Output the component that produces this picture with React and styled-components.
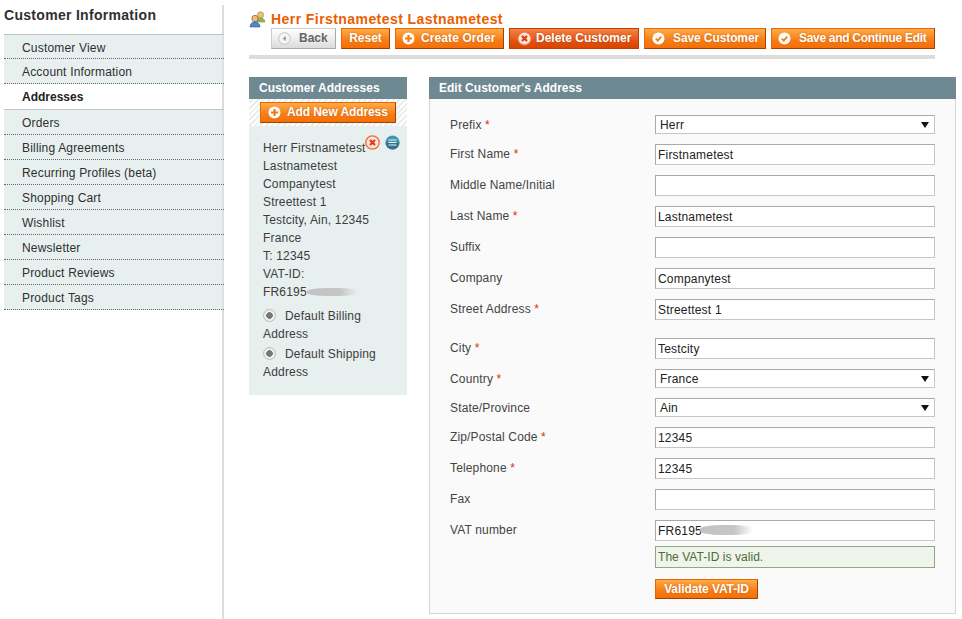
import React from 'react'
import styled, { createGlobalStyle, css } from 'styled-components'

const GlobalStyle = createGlobalStyle`
  html, body {
    margin: 0;
    padding: 0;
    background: #fff;
  }
  body {
    font-family: "Liberation Sans", Arial, sans-serif;
    font-size: 12px;
    color: #2f2f2f;
  }
`

const Page = styled.div`
  display: flex;
  width: 962px;
  height: 619px;
  overflow: hidden;
  box-sizing: border-box;
  padding-left: 4px;
`

const Sidebar = styled.aside`
  width: 220px;
  flex: none;
  box-sizing: border-box;
  margin-top: 5px;
  border-right: 2px solid #dcdcdc;
`

const SideTitle = styled.h3`
  margin: 0;
  height: 29px;
  font-size: 14px;
  line-height: 20px;
  font-weight: bold;
  color: #2f2f2f;
  letter-spacing: 0.3px;
`

const SideNav = styled.ul`
  list-style: none;
  margin: 0 -2px 0 0;
  padding: 0;
  border-top: 1px solid #bfc5c5;
`

const SideItem = styled.li`
  box-sizing: border-box;
  height: 25px;
  padding-left: 18px;
  line-height: 26px;
  letter-spacing: 0.18px;
  color: #2f2f2f;
  background: #e7efef;
  border-bottom: 1px dotted #666;
  box-shadow: inset -2px 0 0 rgba(0, 0, 0, 0.05);
  &:first-child {
    height: 24px;
  }
  ${props => props.$active && css`
    background: #fff;
    font-weight: bold;
    color: #222;
    letter-spacing: 0;
    height: 26px;
    border-bottom: 1px solid #bfc5c5;
    box-shadow: inset -2px 0 0 #dcdcdc;
  `}
`

const Content = styled.main`
  flex: 1;
  padding: 10px 6px 0 25px;
`

const HeaderBlock = styled.header`
  width: 686px;
  height: 45px;
  border-bottom: 4px solid #dcdcdc;
`

const TitleRow = styled.div`
  display: flex;
  align-items: center;
  gap: 5px;
  height: 18px;
`

const Title = styled.h1`
  margin: 0;
  font-size: 14px;
  line-height: 18px;
  font-weight: bold;
  color: #eb5e00;
  letter-spacing: 0.43px;
`

const Toolbar = styled.div`
  display: flex;
  gap: 5px;
  padding-left: 22px;
`

const variants = {
  primary: css`
    color: #fff;
    border-color: #ed6502 #a04300 #a04300 #ed6502;
    background: linear-gradient(#ffac47, #f77c16 60%, #f46f08);
    text-shadow: 0 0 2px rgba(170, 70, 0, 0.6);
  `,
  danger: css`
    color: #fff;
    border-color: #c73c00;
    background: linear-gradient(#f38544, #e2500f 65%, #d94400);
    text-shadow: 0 0 2px rgba(150, 40, 0, 0.6);
  `,
  back: css`
    color: #666;
    border-color: #ccc #aaa #aaa #ccc;
    background: linear-gradient(#fff, #dcdcdc);
  `,
}

const Button = styled.button`
  display: flex;
  align-items: center;
  justify-content: ${props => (props.$icon ? 'flex-start' : 'center')};
  gap: ${props => props.$gap || 8}px;
  box-sizing: border-box;
  width: ${props => props.$w}px;
  height: 21px;
  padding: 0 0 1px ${props => props.$pad ?? 0}px;
  border: 1px solid;
  font-family: inherit;
  font-size: 12px;
  font-weight: bold;
  letter-spacing: ${props => props.$ls ?? -0.1}px;
  white-space: nowrap;
  ${props => variants[props.$kind || 'primary']}
  svg {
    flex: none;
  }
`

const Columns = styled.div`
  display: flex;
  align-items: flex-start;
  gap: 22px;
  margin-top: 18px;
`

const PanelHead = styled.div`
  box-sizing: border-box;
  height: 22px;
  padding-left: 10px;
  line-height: 22px;
  font-weight: bold;
  letter-spacing: 0.02px;
  color: #fff;
  background: #6f8992;
`

const LeftColumn = styled.section`
  width: 158px;
  flex: none;
`

const AddStrip = styled.div`
  box-sizing: border-box;
  height: 27px;
  padding: 3px 0 0 11px;
  background: repeating-linear-gradient(135deg, #fff 0 2px, #eceeee 2px 4px);
`

const AddressCard = styled.div`
  position: relative;
  box-sizing: border-box;
  height: 269px;
  padding: 13px 14px 0;
  line-height: 18px;
  letter-spacing: 0.18px;
  color: #3d3d3d;
  background: #e7efef;
`

const Line = styled.div`
  white-space: nowrap;
`

const CardIcons = styled.div`
  position: absolute;
  top: 9px;
  left: 116px;
  display: flex;
  gap: 5px;
`

const DefaultOption = styled.div`
  margin-top: ${props => props.$mt}px;
`

const Radio = styled.span`
  display: inline-block;
  box-sizing: border-box;
  width: 13px;
  height: 13px;
  margin-right: 9px;
  vertical-align: -2px;
  border: 1px solid #bcbcbc;
  border-radius: 50%;
  background: radial-gradient(circle, #777 0 3px, #eee 3.6px);
`

const VatValue = styled.span`
  position: relative;
  display: inline-block;
`

const Smudge = styled.i`
  position: absolute;
  top: ${props => props.$top}px;
  left: ${props => props.$left}px;
  width: ${props => props.$w}px;
  height: ${props => props.$h}px;
  border-radius: 40%;
  background: linear-gradient(90deg, #c2c2c2, #c6c6c6 65%, rgba(215, 215, 215, 0));
  filter: blur(0.7px);
`

const EditPanel = styled.section`
  width: 527px;
  flex: none;
`

const FormBody = styled.div`
  box-sizing: border-box;
  height: 515px;
  padding: 16px 20px 0;
  border: 1px solid #d6d6d6;
  border-top: none;
  background: #fafafa;
`

const FormRow = styled.div`
  display: flex;
  align-items: flex-start;
  margin-bottom: ${props => props.$gap ?? 10}px;
`

const FieldLabel = styled.label`
  width: 205px;
  height: 18px;
  flex: none;
  line-height: 20px;
  letter-spacing: 0.15px;
  color: #444;
`

const Required = styled.span`
  color: #d9300a;
`

const fieldBase = css`
  box-sizing: border-box;
  width: 280px;
  padding: 0 2px;
  background: #fff;
  font-family: inherit;
  font-size: 12px;
  letter-spacing: 0.2px;
  color: #222;
  border: 1px solid #c6c6c6;
  border-top-color: #aaa;
  border-left-color: #aaa;
`

const TextInput = styled.input`
  ${fieldBase}
  height: 21px;
  outline: none;
`

const SelectBox = styled.div`
  ${fieldBase}
  display: flex;
  align-items: center;
  justify-content: space-between;
  height: 19px;
  padding: 0 4px;
`

const Arrow = styled.span`
  width: 0;
  height: 0;
  margin-right: 1px;
  border-left: 4px solid transparent;
  border-right: 4px solid transparent;
  border-top: 6px solid #111;
`

const FieldStack = styled.div`
  position: relative;
  width: 280px;
`

const ValidMessage = styled.div`
  box-sizing: border-box;
  width: 280px;
  height: 22px;
  margin-top: 5px;
  padding-left: 2px;
  line-height: 20px;
  letter-spacing: 0.05px;
  color: #4f6a3d;
  background: #eff5ea;
  border: 1px solid #95a486;
`

const ValidateButton = styled(Button)`
  margin-top: 11px;
  height: 20px;
`

const PlusIcon = () => (
  <svg width="13" height="13" viewBox="0 0 13 13">
    <circle cx="6.5" cy="6.5" r="6" fill="#fff" />
    <path d="M6.5 3v7M3 6.500h7" stroke="#f27a12" strokeWidth="2.2" />
  </svg>
)

const CheckIcon = () => (
  <svg width="13" height="13" viewBox="0 0 13 13">
    <circle cx="6.5" cy="6.5" r="6" fill="#fff" />
    <path d="M3.800 6.600l2 2 3.400-4" fill="none" stroke="#f27a12" strokeWidth="1.8" />
  </svg>
)

const DeleteIcon = ({ size = 15 }) => (
  <svg width={size} height={size} viewBox="0 0 15 15">
    <circle cx="7.5" cy="7.5" r="6.7" fill="#fbe4d8" stroke="#ee6a3a" strokeWidth="1.3" />
    <path d="M5 5l5 5M10 5l-5 5" stroke="#e0381a" strokeWidth="2.2" />
  </svg>
)

const BackIcon = () => (
  <svg width="13" height="13" viewBox="0 0 13 13">
    <circle cx="6.5" cy="6.5" r="5.8" fill="#f4f4f4" stroke="#c4c4c4" />
    <path d="M7.800 4v5L4.600 6.500z" fill="#999" />
  </svg>
)

const MenuIcon = () => (
  <svg width="15" height="15" viewBox="0 0 15 15">
    <circle cx="7.5" cy="7.5" r="7" fill="#4594b0" />
    <path d="M0.500 7.500a7 7 0 0 0 14 0z" fill="#2f7390" />
    <path d="M3.500 5h8M3.500 7.500h8M3.500 10h8" stroke="#e8f3f6" strokeWidth="1.2" />
  </svg>
)

const CustomerIcon = () => (
  <svg width="17" height="17" viewBox="0 0 17 17">
    <circle cx="11.500" cy="4" r="3.200" fill="#e9bf7a" stroke="#b8883e" strokeWidth="0.6" />
    <path d="M8 11c0-3 1.500-4 3.500-4s4 1 4.500 4z" fill="#8dbb4e" stroke="#6a9435" strokeWidth="0.6" />
    <circle cx="6" cy="7.500" r="3.200" fill="#f0b98a" stroke="#8a4f2a" strokeWidth="0.7" />
    <path d="M1 16c0-3 2-5 5-5s5 2 5 5z" fill="#4f87c9" stroke="#2e5f9c" strokeWidth="0.6" />
  </svg>
)

const sideItems = [
  ['Customer View'], ['Account Information'], ['Addresses', true], ['Orders'],
  ['Billing Agreements'], ['Recurring Profiles (beta)'], ['Shopping Cart'], ['Wishlist'],
  ['Newsletter'], ['Product Reviews'], ['Product Tags'],
]

const addressLines = ['Lastnametest', 'Companytest', 'Streettest 1', 'Testcity, Ain, 12345', 'France', 'T: 12345', 'VAT-ID:']

const Field = ({ label, required, value = '', gap, select }) => (
  <FormRow $gap={gap}>
    <FieldLabel>{label}{required && <Required> *</Required>}</FieldLabel>
    {select
      ? <SelectBox>{value}<Arrow /></SelectBox>
      : <TextInput readOnly value={value} />}
  </FormRow>
)

const App = () => (
  <Page>
    <GlobalStyle />
    <Sidebar>
      <SideTitle>Customer Information</SideTitle>
      <SideNav>
        {sideItems.map(([name, active]) => <SideItem key={name} $active={active}>{name}</SideItem>)}
      </SideNav>
    </Sidebar>
    <Content>
      <HeaderBlock>
        <TitleRow>
          <CustomerIcon />
          <Title>Herr Firstnametest Lastnametest</Title>
        </TitleRow>
        <Toolbar>
          <Button $kind="back" $w={65} $icon $pad={6} $gap={8} $ls={0}><BackIcon />Back</Button>
          <Button $w={49} $ls={0}>Reset</Button>
          <Button $w={109} $icon $pad={6} $gap={6} $ls={0.1}><PlusIcon />Create Order</Button>
          <Button $kind="danger" $w={130} $icon $pad={7} $gap={4} $ls={0}><DeleteIcon />Delete Customer</Button>
          <Button $w={122} $icon $pad={7} $gap={8}><CheckIcon />Save Customer</Button>
          <Button $w={164} $icon $pad={6} $gap={8} $ls={-0.3}><CheckIcon />Save and Continue Edit</Button>
        </Toolbar>
      </HeaderBlock>
      <Columns>
        <LeftColumn>
          <PanelHead>Customer Addresses</PanelHead>
          <AddStrip>
            <Button $w={136} $icon $pad={7} $gap={6}><PlusIcon />Add New Address</Button>
          </AddStrip>
          <AddressCard>
            <CardIcons><DeleteIcon /><MenuIcon /></CardIcons>
            <Line>Herr Firstnametest</Line>
            {addressLines.map(line => <Line key={line}>{line}</Line>)}
            <Line><VatValue>FR6195<Smudge $top={5} $left={44} $w={51} $h={8} /></VatValue></Line>
            <DefaultOption $mt={6}><Radio />Default Billing Address</DefaultOption>
            <DefaultOption $mt={2}><Radio />Default Shipping Address</DefaultOption>
          </AddressCard>
        </LeftColumn>
        <EditPanel>
          <PanelHead>Edit Customer's Address</PanelHead>
          <FormBody>
            <Field label="Prefix" required select value="Herr" />
            <Field label="First Name" required value="Firstnametest" />
            <Field label="Middle Name/Initial" />
            <Field label="Last Name" required value="Lastnametest" />
            <Field label="Suffix" />
            <Field label="Company" value="Companytest" />
            <Field label="Street Address" required value="Streettest 1" gap={18} />
            <Field label="City" required value="Testcity" />
            <Field label="Country" required select value="France" />
            <Field label="State/Province" select value="Ain" />
            <Field label="Zip/Postal Code" required value="12345" />
            <Field label="Telephone" required value="12345" />
            <Field label="Fax" />
            <FormRow>
              <FieldLabel>VAT number</FieldLabel>
              <FieldStack>
                <TextInput readOnly value="FR6195" />
                <Smudge $top={5} $left={45} $w={53} $h={10} />
                <ValidMessage>The VAT-ID is valid.</ValidMessage>
                <ValidateButton $w={103}>Validate VAT-ID</ValidateButton>
              </FieldStack>
            </FormRow>
          </FormBody>
        </EditPanel>
      </Columns>
    </Content>
  </Page>
)

export default App
